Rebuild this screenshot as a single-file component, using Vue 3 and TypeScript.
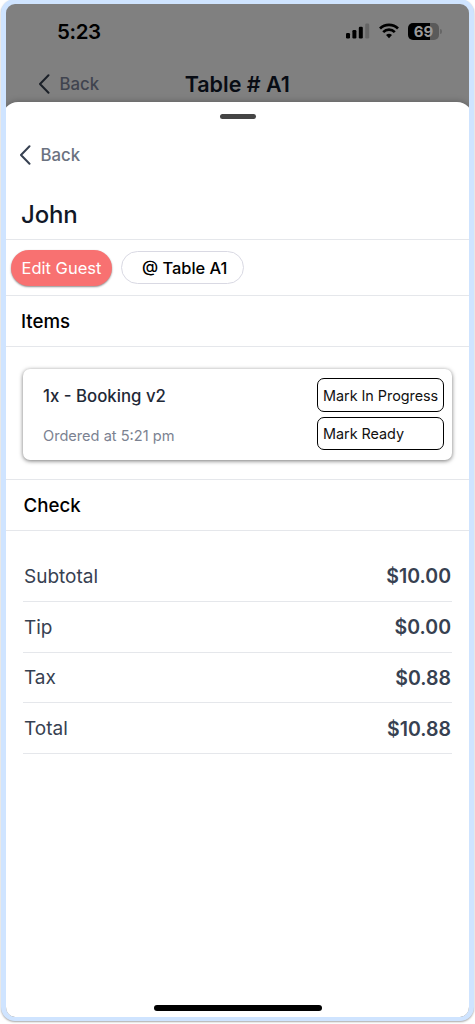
<script setup lang="ts">
interface CheckLine {
  label: string
  amount: string
}

const checkLines: CheckLine[] = [
  { label: 'Subtotal', amount: '$10.00' },
  { label: 'Tip', amount: '$0.00' },
  { label: 'Tax', amount: '$0.88' },
  { label: 'Total', amount: '$10.88' },
]

const itemActions: string[] = ['Mark In Progress', 'Mark Ready']
</script>

<template>
  <div class="page">
    <div class="phone">
      <div class="backdrop">
        <div class="status">
          <span class="time">5:23</span>
          <div class="indicators">
            <svg class="signal" width="24" height="16" viewBox="0 0 24 16">
              <rect x="0" y="10" width="4" height="5.4" rx="1.2" />
              <rect x="6.4" y="7" width="4" height="8.4" rx="1.2" />
              <rect x="12.8" y="3.7" width="4" height="11.7" rx="1.2" />
              <rect x="19.2" y="0.5" width="4" height="14.9" rx="1.2" fill="#666" />
            </svg>
            <svg class="wifi" width="20" height="16" viewBox="0 0 20 16" fill="none" stroke="#000" stroke-width="2.7">
              <path d="M1 5.5a12.8 12.8 0 0 1 18 0" />
              <path d="M4.2 9.1a8.2 8.2 0 0 1 11.6 0" />
              <path d="M7 12.1a4.4 4.4 0 0 1 6 0L10 15.2z" fill="#000" stroke="none" />
            </svg>
            <div class="battery">
              <div class="cell"><span>69</span></div>
              <i class="nub"></i>
            </div>
          </div>
        </div>
        <div class="nav">
          <svg class="chevron" width="12" height="20" viewBox="0 0 12 20"><path d="M10.5 1.2 2 10l8.5 8.8" /></svg>
          <span class="back">Back</span>
          <span class="title">Table # A1</span>
        </div>
      </div>

      <main class="sheet">
        <div class="grabber"></div>
        <div class="sheet-nav">
          <svg class="chevron" width="12" height="20" viewBox="0 0 12 20"><path d="M10.5 1.2 2 10l8.5 8.8" /></svg>
          <span class="back">Back</span>
        </div>
        <h1><span>John</span></h1>
        <div class="chips">
          <button class="edit">Edit Guest</button>
          <div class="table-chip">@ Table A1</div>
        </div>
        <h2 class="items-title">Items</h2>
        <section class="items">
          <article class="card">
            <div class="info">
              <div class="name">1x - Booking v2</div>
              <div class="ordered">Ordered at 5:21 pm</div>
            </div>
            <div class="actions">
              <button v-for="action in itemActions" :key="action"><span>{{ action }}</span></button>
            </div>
          </article>
        </section>
        <h2 class="check-title">Check</h2>
        <section class="check">
          <div v-for="line in checkLines" :key="line.label" class="line">
            <span>{{ line.label }}</span>
            <strong>{{ line.amount }}</strong>
          </div>
        </section>
        <div class="home"></div>
      </main>
    </div>
  </div>
</template>

<style>
body {
  background: #fff;
}
</style>

<style scoped>
* {
  box-sizing: border-box;
}
.page {
  height: 1024px;
  padding: 0 1px;
  overflow: hidden;
  font-family: Inter, "Liberation Sans", sans-serif;
  color: #000;
}
.phone {
  height: 1022px;
  margin-top: -1px;
  border: 5px solid #cfe4ff;
  border-bottom-width: 4px;
  border-radius: 14px;
  background: #808080;
  box-shadow: 0 1px 2px rgba(0, 0, 0, 0.35);
  overflow: hidden;
  display: flex;
  flex-direction: column;
}
.backdrop {
  height: 98px;
  flex: none;
}
.status {
  height: 54px;
  display: flex;
  justify-content: space-between;
  padding: 0 27px 0 51px;
  align-items: center;
}
.time {
  font-size: 20.5px;
  font-weight: 600;
  letter-spacing: -0.4px;
}
.indicators {
  display: flex;
  align-items: center;
}
.wifi {
  margin-left: 9px;
}
.battery {
  display: flex;
  align-items: center;
  margin-left: 9px;
}
.cell {
  width: 31px;
  height: 17px;
  border-radius: 5px;
  background: linear-gradient(90deg, #000 70%, #5a5a5a 70%);
  display: flex;
  align-items: center;
  justify-content: center;
  font-size: 15px;
  font-weight: 700;
  color: #999;
}
.nub {
  width: 2px;
  height: 5px;
  margin-left: 1px;
  border-radius: 0 2px 2px 0;
  background: #666;
}
.nav {
  height: 51px;
  display: flex;
  align-items: center;
  padding: 0 0 0 32px;
}
.chevron {
  fill: none;
  stroke: #374151;
  stroke-width: 2;
  stroke-linecap: round;
  stroke-linejoin: round;
}
.nav .chevron {
  stroke: #1b2028;
}
.back {
  margin-left: 9.5px;
  font-size: 16.8px;
  font-weight: 500;
  color: #6b7280;
}
.nav .back {
  color: #40444f;
}
.title {
  margin-left: 85.5px;
  font-size: 21.5px;
  font-weight: 600;
  color: #080c14;
}
.sheet {
  position: relative;
  isolation: isolate;
  flex: 1;
  display: flex;
  flex-direction: column;
}
.sheet::before {
  content: "";
  position: absolute;
  z-index: -1;
  inset: 0 -4px;
  background: #fff;
  border-radius: 16px 16px 0 0;
  box-shadow: 0 0 7px rgba(0, 0, 0, 0.3);
}
.grabber {
  width: 36px;
  height: 5px;
  border-radius: 3px;
  margin: 12px auto 0;
  background: #454545;
}
.sheet-nav {
  display: flex;
  align-items: center;
  height: 20px;
  margin: 26px 0 0 13px;
}
h1 {
  margin: 25px 0 0;
  padding: 0 15px;
  height: 50px;
  display: flex;
  align-items: center;
  font-size: 24px;
  font-weight: 500;
  letter-spacing: -0.15px;
  color: #111827;
  border-bottom: 1px solid #e5e7eb;
}
.chips {
  height: 56px;
  display: flex;
  align-items: center;
  gap: 9px;
  padding: 0 5px;
  border-bottom: 1px solid #e5e7eb;
}
.edit {
  width: 101px;
  height: 36px;
  border: 0;
  border-radius: 18px;
  padding: 0;
  font: 400 16.5px Inter, sans-serif;
  color: #fff;
  background: #f87171;
  box-shadow: 0 1px 2px rgba(0, 0, 0, 0.45);
}
.table-chip {
  width: 123px;
  height: 33px;
  border: 1px solid #d9d9e3;
  border-radius: 17px;
  display: flex;
  align-items: center;
  padding-left: 20px;
  font-size: 16.4px;
  font-weight: 500;
  white-space: nowrap;
}
h2 {
  margin: 0;
  height: 51px;
  display: flex;
  align-items: center;
  padding: 1px 0 0 15px;
  font-size: 18.7px;
  font-weight: 500;
  border-bottom: 1px solid #e5e7eb;
}
.items {
  height: 133px;
  padding: 22px 17px 0;
  border-bottom: 1px solid #e5e7eb;
}
.card {
  height: 91px;
  border-radius: 7px;
  display: flex;
  justify-content: space-between;
  padding: 9px 8px 0 20px;
  background: #fff;
  box-shadow: 0 1px 4px rgba(0, 0, 0, 0.55);
}
.name {
  margin-top: 7px;
  font-size: 16.8px;
  line-height: 22px;
  font-weight: 500;
  color: #1f2937;
}
.ordered {
  margin-top: 19px;
  font-size: 14.6px;
  line-height: 20px;
  color: #7b8291;
}
.actions {
  width: 127px;
  display: flex;
  flex-direction: column;
  gap: 5px;
}
.actions button {
  height: 33.5px;
  flex: none;
  padding: 1px 0 0 5px;
  border: 1px solid #000;
  border-radius: 7px;
  background: #fff;
  color: #111;
  text-align: left;
  white-space: nowrap;
  font: 400 14.4px Inter, sans-serif;
  letter-spacing: -0.03px;
}
.check-title {
  padding-left: 17.5px;
}
.check {
  padding: 20px 17px 0;
}
.line {
  height: 50.8px;
  display: flex;
  align-items: center;
  justify-content: space-between;
  padding: 1px 1px 0;
  font-size: 19px;
  color: #374151;
  border-bottom: 1px solid #e5e7eb;
}
.line strong {
  font-weight: 600;
  font-size: 19.5px;
}
.home {
  width: 168px;
  height: 6px;
  border-radius: 3px;
  background: #000;
  margin: auto auto 6px;
}
</style>
